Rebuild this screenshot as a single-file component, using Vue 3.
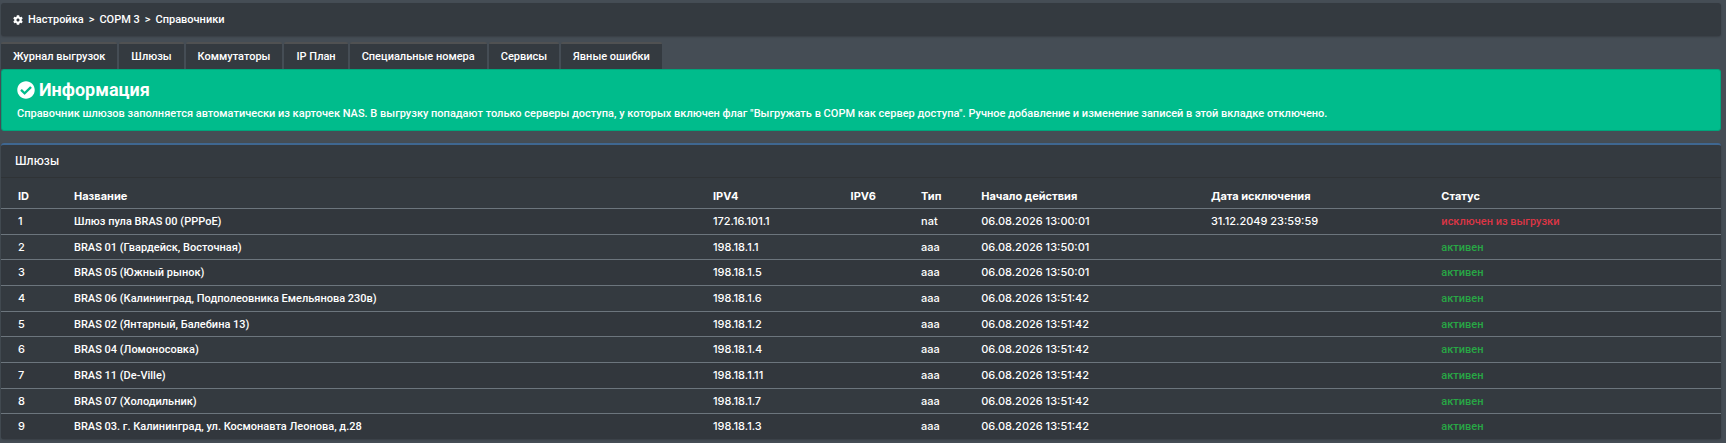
<template>
  <div class="page">
    <nav class="breadcrumbs">
      <svg class="gear" viewBox="0 0 512 512" aria-hidden="true">
        <path fill="currentColor" d="M487.4 315.7l-42.6-24.6c4.3-23.2 4.3-47 0-70.2l42.6-24.6c4.9-2.8 7.1-8.6 5.5-14-11.1-35.6-30-67.8-54.7-94.6-3.8-4.1-10-5.1-14.8-2.3L380.8 110c-17.900-15.400-38.500-27.300-60.800-35.100V25.800c0-5.600-3.900-10.500-9.400-11.700-36.700-8.200-74.300-7.800-109.200 0-5.500 1.200-9.400 6.100-9.400 11.700V75c-22.200 7.900-42.800 19.800-60.800 35.100L88.700 85.500c-4.900-2.800-11-1.900-14.800 2.300-24.700 26.700-43.600 58.900-54.700 94.600-1.700 5.400.6 11.200 5.500 14L67.300 221c-4.300 23.200-4.300 47 0 70.200l-42.6 24.600c-4.900 2.800-7.100 8.600-5.500 14 11.100 35.600 30 67.800 54.700 94.600 3.800 4.100 10 5.100 14.800 2.300l42.600-24.600c17.900 15.400 38.500 27.300 60.800 35.100v49.200c0 5.600 3.900 10.500 9.400 11.700 36.700 8.200 74.300 7.800 109.200 0 5.500-1.200 9.400-6.100 9.400-11.700v-49.200c22.200-7.900 42.800-19.800 60.800-35.100l42.600 24.600c4.900 2.800 11 1.900 14.800-2.300 24.700-26.700 43.600-58.900 54.700-94.600 1.500-5.500-.7-11.300-5.600-14.100zM256 336c-44.100 0-80-35.900-80-80s35.900-80 80-80 80 35.900 80 80-35.900 80-80 80z" />
      </svg>
      <template v-for="(crumb, index) in crumbs" :key="crumb">
        <span v-if="index > 0">&gt;</span>
        <a href="#">{{ crumb }}</a>
      </template>
    </nav>

    <nav class="tabs">
      <a v-for="tab in tabs" :key="tab" href="#" class="tab">{{ tab }}</a>
    </nav>

    <div class="alert">
      <h5>
        <svg class="check" viewBox="0 0 512 512" aria-hidden="true">
          <path fill="currentColor" d="M504 256c0 136.967-111.033 248-248 248S8 392.967 8 256 119.033 8 256 8s248 111.033 248 248zM227.314 387.314l184-184c6.248-6.248 6.248-16.379 0-22.627l-22.627-22.627c-6.248-6.249-16.379-6.249-22.628 0L216 308.118l-70.059-70.059c-6.248-6.248-16.379-6.248-22.628 0l-22.627 22.627c-6.248 6.248-6.248 16.379 0 22.627l104 104c6.249 6.249 16.379 6.249 22.628.001z" />
        </svg>
        Информация
      </h5>
      <p>Справочник шлюзов заполняется автоматически из карточек NAS. В выгрузку попадают только серверы доступа, у которых включен флаг "Выгружать в СОРМ как сервер доступа". Ручное добавление и изменение записей в этой вкладке отключено.</p>
    </div>

    <div class="card">
      <h3 class="card-header">Шлюзы</h3>
      <table>
        <colgroup>
          <col class="col-id">
          <col class="col-name">
          <col class="col-ipv4">
          <col class="col-ipv6">
          <col class="col-type">
          <col class="col-start">
          <col class="col-end">
          <col class="col-status">
        </colgroup>
        <thead>
          <tr>
            <th>ID</th>
            <th>Название</th>
            <th>IPV4</th>
            <th>IPV6</th>
            <th>Тип</th>
            <th>Начало действия</th>
            <th>Дата исключения</th>
            <th>Статус</th>
          </tr>
        </thead>
        <tbody>
          <tr v-for="row in gateways" :key="row.id">
            <td>{{ row.id }}</td>
            <td class="name">{{ row.name }}</td>
            <td>{{ row.ipv4 }}</td>
            <td></td>
            <td>{{ row.type }}</td>
            <td>{{ row.start }}</td>
            <td>{{ row.end }}</td>
            <td class="status" :class="row.end ? 'excluded' : 'active'">{{ row.end ? 'исключен из выгрузки' : 'активен' }}</td>
          </tr>
        </tbody>
      </table>
    </div>
  </div>
</template>

<script setup>
import { ref } from 'vue'

const crumbs = ['Настройка', 'СОРМ 3', 'Справочники']

const tabs = [
  'Журнал выгрузок',
  'Шлюзы',
  'Коммутаторы',
  'IP План',
  'Специальные номера',
  'Сервисы',
  'Явные ошибки'
]

const gateways = ref([
  { id: 1, name: 'Шлюз пула BRAS 00 (PPPoE)', ipv4: '172.16.101.1', type: 'nat', start: '06.08.2026 13:00:01', end: '31.12.2049 23:59:59' },
  { id: 2, name: 'BRAS 01 (Гвардейск, Восточная)', ipv4: '198.18.1.1', type: 'aaa', start: '06.08.2026 13:50:01', end: '' },
  { id: 3, name: 'BRAS 05 (Южный рынок)', ipv4: '198.18.1.5', type: 'aaa', start: '06.08.2026 13:50:01', end: '' },
  { id: 4, name: 'BRAS 06 (Калининград, Подполеовника Емельянова 230в)', ipv4: '198.18.1.6', type: 'aaa', start: '06.08.2026 13:51:42', end: '' },
  { id: 5, name: 'BRAS 02 (Янтарный, Балебина 13)', ipv4: '198.18.1.2', type: 'aaa', start: '06.08.2026 13:51:42', end: '' },
  { id: 6, name: 'BRAS 04 (Ломоносовка)', ipv4: '198.18.1.4', type: 'aaa', start: '06.08.2026 13:51:42', end: '' },
  { id: 7, name: 'BRAS 11 (De-Ville)', ipv4: '198.18.1.11', type: 'aaa', start: '06.08.2026 13:51:42', end: '' },
  { id: 8, name: 'BRAS 07 (Холодильник)', ipv4: '198.18.1.7', type: 'aaa', start: '06.08.2026 13:51:42', end: '' },
  { id: 9, name: 'BRAS 03. г. Калининград, ул. Космонавта Леонова, д.28', ipv4: '198.18.1.3', type: 'aaa', start: '06.08.2026 13:51:42', end: '' }
])
</script>

<style>
body {
  background-color: #454d55;
}
</style>

<style scoped>
.page {
  padding: 3px 5px 4px 1px;
  font-family: Roboto, sans-serif;
  font-size: 11px;
  font-weight: 500;
  line-height: 16px;
  color: #fff;
}

a {
  color: inherit;
  text-decoration: none;
}

.breadcrumbs {
  display: flex;
  align-items: center;
  gap: 5px;
  margin-bottom: 6px;
  padding: 9px 12px 8px;
  background-color: #343a40;
  border-radius: 3px;
  box-shadow: 0 1px 2px rgba(0, 0, 0, 0.2);
}

.gear {
  width: 10px;
  height: 10px;
}

.tabs {
  display: flex;
  gap: 2px;
}

.tab {
  padding: 5px 12px 4px;
  background-color: #343a40;
  border-top: 2px solid #505152;
  border-radius: 2px 2px 0 0;
}

.alert {
  margin-bottom: 12px;
  padding: 10px 15px 8px;
  background-color: #00bc8c;
  border: 1px solid #00a57b;
  border-radius: 3px;
}

.alert h5 {
  display: flex;
  align-items: center;
  gap: 4px;
  margin: 0 0 6px;
  font-size: 18px;
  font-weight: 700;
  line-height: 20px;
}

.alert p {
  margin: 0;
}

.check {
  width: 18px;
  height: 18px;
}

.card {
  overflow: hidden;
  background-color: #343a40;
  border-top: 2px solid #3f6791;
  border-radius: 3px;
  box-shadow: 0 1px 2px rgba(0, 0, 0, 0.2);
}

.card-header {
  margin: 0;
  padding: 8px 14px;
  font-family: Inter, sans-serif;
  font-size: 12px;
  font-weight: 500;
  border-bottom: 1px solid #2f3336;
}

table {
  width: 100%;
  font-family: Inter, sans-serif;
  table-layout: fixed;
  border-spacing: 0;
}

.col-id {
  width: 56px;
}

.col-name {
  width: 37.15%;
}

.col-ipv4 {
  width: 8%;
}

.col-ipv6 {
  width: 4.1%;
}

.col-type {
  width: 3.5%;
}

.col-start {
  width: 13.35%;
}

.col-end {
  width: 13.4%;
}

th,
td {
  box-sizing: border-box;
  height: 26px;
  padding: 0 0 0 17px;
  text-align: left;
  white-space: nowrap;
}

th {
  height: 30px;
  padding-top: 6px;
  font-weight: 700;
}

td {
  padding-top: 4px;
  vertical-align: baseline;
  border-top: 1px solid #6c757d;
}

tbody tr:nth-child(3n + 2) td {
  height: 25px;
}

tbody tr:nth-child(odd) {
  background-color: #32373d;
}

.name,
.status {
  font-family: Roboto, sans-serif;
}

.excluded {
  color: #dc3545;
}

.active {
  color: #28a745;
}
</style>
